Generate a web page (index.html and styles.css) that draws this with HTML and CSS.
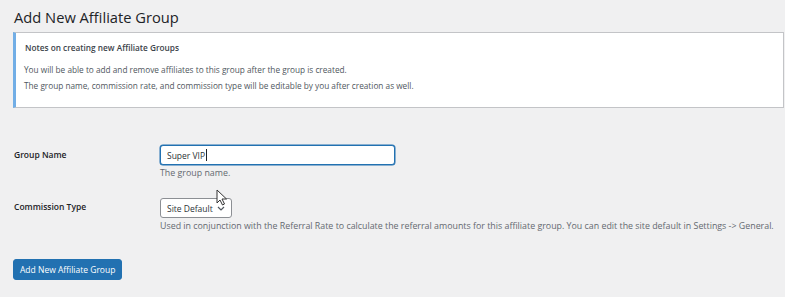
FILE: index.html
```html
<!DOCTYPE html>
<html lang="en">
<head>
    <meta charset="UTF-8">
    <meta name="viewport" content="width=device-width, initial-scale=1.0">
    <title>Add New Affiliate Group</title>
    <link rel="stylesheet" href="styles.css">
</head>
<body>
    <div class="wrap">
        <h1>Add New Affiliate Group</h1>

        <!-- Notice -->
        <div class="notice">
            <p class="notice-title">Notes on creating new Affiliate Groups</p>
            <p>You will be able to add and remove affiliates to this group after the group is created.</p>
            <p>The group name, commission rate, and commission type will be editable by you after creation as well.</p>
        </div>

        <!-- Form -->
        <form class="form-table">
            <div class="row">
                <label for="groupName">Group Name</label>
                <div class="field">
                    <div class="input" id="groupName">Super VIP<span class="caret"></span></div>
                    <p class="description">The group name.</p>
                </div>
            </div>
            <div class="row">
                <label for="commissionType">Commission Type</label>
                <div class="field">
                    <div class="select-wrap">
                        <div class="select" id="commissionType">
                            Site Default
                            <svg width="8" height="5" viewBox="0 0 8 5"><path d="M1 1l3 3 3-3" fill="none" stroke="#50575e" stroke-width="1.2"/></svg>
                        </div>
                        <svg class="cursor" width="12" height="17" viewBox="0 0 12 17"><path d="M1 1v13l3-3 2.5 5 2-1-2.5-5h4.5z" fill="#fff" stroke="#333" stroke-width="1"/></svg>
                    </div>
                    <p class="description">Used in conjunction with the Referral Rate to calculate the referral amounts for this affiliate group. You can edit the site default in Settings -&gt; General.</p>
                </div>
            </div>
            <button type="button" class="button-primary">Add New Affiliate Group</button>
        </form>
    </div>
</body>
</html>
```
FILE: styles.css
```css
* {
    margin: 0;
    padding: 0;
    box-sizing: border-box;
}

body {
    font-family: 'Open Sans', 'Noto Sans', sans-serif;
    background-color: #f0f0f1;
    color: #3c434a;
    font-size: 8.5px;
}

.wrap {
    padding: 5px 1px 0 13px;
}

h1 {
    font-size: 14.7px;
    font-weight: 400;
    color: #1d2327;
    line-height: 24px;
    margin-bottom: 3px;
    padding-left: 1px;
}

/* Notice */
.notice {
    background: #fff;
    border: 1px solid #c3c4c7;
    border-left: 3px solid #72aee6;
    padding: 7px 10px 10px 8px;
    height: 76px;
    font-size: 8.25px;
}

.notice p {
    line-height: 16px;
    color: #50575e;
}

.notice .notice-title {
    font-weight: 600;
    color: #3c434a;
    margin: 0 0 6px 1px;
}

/* Form */
.form-table {
    margin-top: 37px;
}

.row {
    display: flex;
    margin-bottom: 18px;
}

.row label {
    width: 147px;
    font-weight: 600;
    color: #1d2327;
    line-height: 20px;
    padding-left: 1px;
}

.field .input {
    display: flex;
    align-items: center;
    width: 235px;
    height: 20px;
    background: #fff;
    border: 1px solid #2271b1;
    box-shadow: 0 0 0 0.5px #2271b1;
    border-radius: 3px;
    padding: 0 6px;
    color: #2c3338;
}

.caret {
    width: 1px;
    height: 12px;
    background: #1d2327;
    margin-left: 1px;
}

.description {
    color: #646970;
    margin-top: 2px;
    font-size: 8.85px;
}

.select-wrap {
    position: relative;
    display: inline-block;
    margin-top: 1px;
}

.select {
    display: inline-flex;
    align-items: center;
    gap: 4px;
    height: 20px;
    padding: 0 6px;
    background: #fff;
    border: 1px solid #8c8f94;
    border-radius: 3px;
    color: #2c3338;
}

.cursor {
    position: absolute;
    left: 56px;
    top: -9px;
}

.button-primary {
    margin-top: 9px;
    font: inherit;
    background: #2271b1;
    color: #fff;
    border: 1px solid #2271b1;
    border-radius: 3px;
    height: 21px;
    padding: 0 6px;
}
```
